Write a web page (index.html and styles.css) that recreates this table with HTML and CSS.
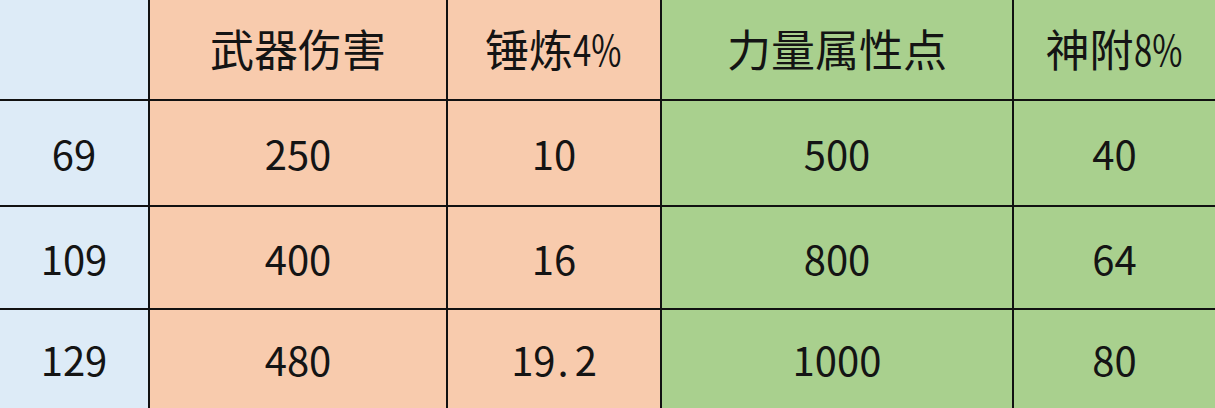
FILE: index.html
```html
<!DOCTYPE html>
<html lang="zh-CN">
<head>
<meta charset="utf-8">
<link rel="stylesheet" href="styles.css">
</head>
<body>
<div class="grid">
  <div class="cell blue"></div>
  <div class="cell orange head">武器伤害</div>
  <div class="cell orange head">锤炼<span class="pct">4%</span></div>
  <div class="cell green head">力量属性点</div>
  <div class="cell green head">神附<span class="pct">8%</span></div>

  <div class="cell blue">69</div>
  <div class="cell orange">250</div>
  <div class="cell orange">10</div>
  <div class="cell green">500</div>
  <div class="cell green">40</div>

  <div class="cell blue">109</div>
  <div class="cell orange">400</div>
  <div class="cell orange">16</div>
  <div class="cell green">800</div>
  <div class="cell green">64</div>

  <div class="cell blue">129</div>
  <div class="cell orange">480</div>
  <div class="cell orange">19<span class="dot">.</span>2</div>
  <div class="cell green">1000</div>
  <div class="cell green">80</div>
</div>
</body>
</html>
```
FILE: styles.css
```css
html, body {
  margin: 0;
  padding: 0;
  width: 1215px;
  height: 408px;
  overflow: hidden;
  background: #ffffff;
}
.grid {
  display: grid;
  grid-template-columns: 148px 296px 212px 350px 201px;
  grid-template-rows: 99px 104px 101px 98px;
  gap: 2px;
  background: #111111;
  width: 1215px;
  height: 408px;
  font-family: "Noto Sans CJK SC", "Noto Sans", sans-serif;
  color: #141414;
}
.cell {
  display: flex;
  align-items: center;
  justify-content: center;
  font-size: 40px;
  line-height: 1;
}
.head {
  font-size: 44px;
  padding-bottom: 4px;
}
.pct {
  display: inline-block;
  font-size: 42px;
  transform: scaleX(0.78);
  transform-origin: left center;
  margin-right: -12px;
}
.blue { background: #ddebf7; }
.orange { background: #f8cbad; }
.green { background: #a9d08e; }
.dot {
  margin: 0 6px 0 2px;
}
```
